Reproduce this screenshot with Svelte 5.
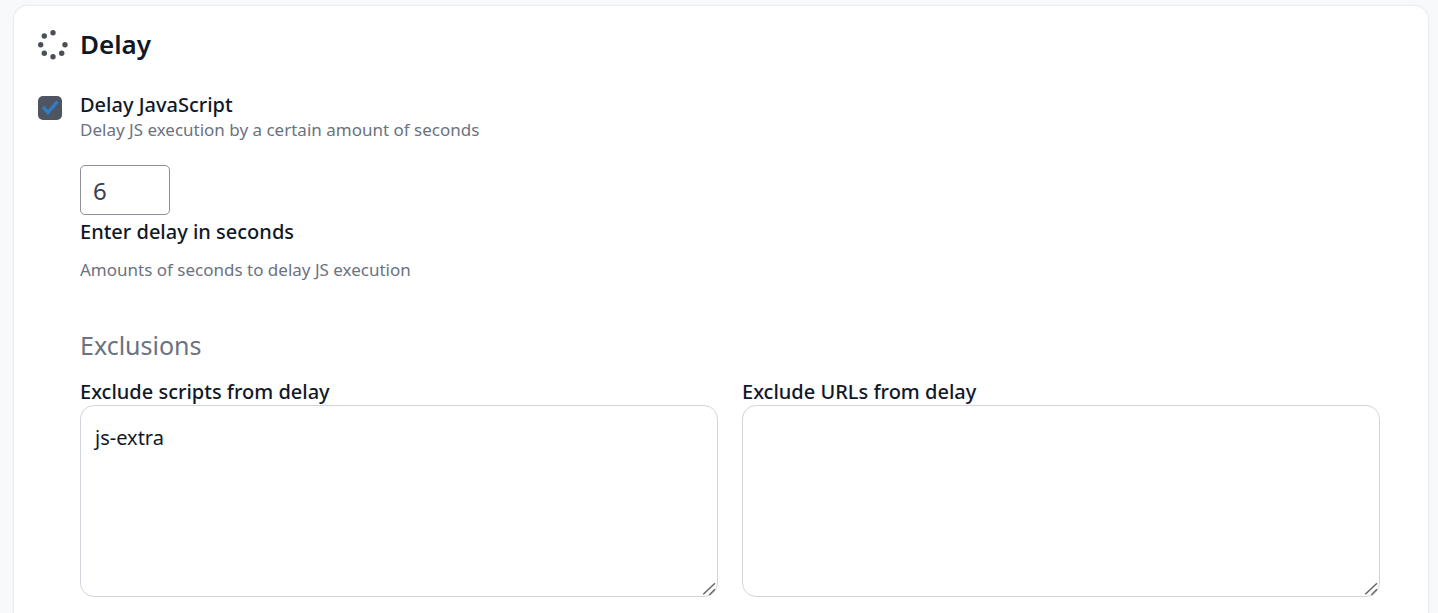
<script>
  let delayEnabled = true;
  let seconds = 6;
  let scripts = 'js-extra';
  let urls = '';

  const dots = [
    [15, 2.7], [6.3, 6], [2.7, 14.7], [6.3, 23.3],
    [15, 26.7], [23.7, 23.3], [27, 14.7]
  ];
</script>

<div class="page">
  <section class="card">
    <header class="title">
      <svg class="spinner" width="32" height="30" viewBox="0 0 32 30" aria-hidden="true">
        {#each dots as [cx, cy]}
          <circle {cx} {cy} r="2.7" fill="#4b4f57" />
        {/each}
      </svg>
      <h2>Delay</h2>
    </header>

    <div class="option">
      <label class="check">
        <input type="checkbox" bind:checked={delayEnabled} />
        <svg width="24" height="24" viewBox="0 0 24 24" aria-hidden="true">
          <rect width="24" height="24" rx="5" fill="#4f5560" />
          <path d="M5 11l5 5.5 9.5-11" fill="none" stroke="#2f7cc8" stroke-width="3.4" />
        </svg>
      </label>
      <div class="body">
        <div class="name">Delay JavaScript</div>
        <div class="hint">Delay JS execution by a certain amount of seconds</div>

        <input class="number" type="text" bind:value={seconds} />
        <div class="name field-label">Enter delay in seconds</div>
        <div class="hint field-hint">Amounts of seconds to delay JS execution</div>

        <h3>Exclusions</h3>
        <div class="columns">
          <div>
            <div class="name area-label">Exclude scripts from delay</div>
            <div class="area">
              <textarea bind:value={scripts}></textarea>
              <svg class="grip" width="16" height="16" viewBox="0 0 16 16" aria-hidden="true">
                <path d="M1.3 12.3L13 1.3M7.3 13L13 7.3" fill="none" stroke="#666" stroke-width="1.5" />
              </svg>
            </div>
          </div>
          <div>
            <div class="name area-label">Exclude URLs from delay</div>
            <div class="area">
              <textarea bind:value={urls}></textarea>
              <svg class="grip" width="16" height="16" viewBox="0 0 16 16" aria-hidden="true">
                <path d="M1.3 12.3L13 1.3M7.3 13L13 7.3" fill="none" stroke="#666" stroke-width="1.5" />
              </svg>
            </div>
          </div>
        </div>
      </div>
    </div>
  </section>
</div>

<style>
  :global(body) {
    background: #f8f9fb;
    font-family: "Noto Sans", "Open Sans", sans-serif;
    overflow: hidden;
  }

  .page {
    padding: 6px 10px 0 14px;
    height: 607px;
    overflow: hidden;
  }

  .card {
    background: #fff;
    border-radius: 14px;
    box-shadow: 0 0 2px 1px #e9eaee;
    padding: 22px 24px 40px 24px;
    height: 700px;
    box-sizing: border-box;
  }

  .title {
    display: flex;
    align-items: center;
    gap: 10px;
    height: 34px;
    margin-bottom: 30px;
  }

  .spinner {
    margin-top: -1px;
  }

  h2 {
    margin: -3px 0 0;
    font-size: 26px;
    font-weight: 600;
    color: #111827;
  }

  .option {
    display: flex;
    gap: 18px;
  }

  .check {
    display: block;
    width: 24px;
    height: 24px;
    margin-top: 4px;
    position: relative;
  }

  .check input {
    position: absolute;
    opacity: 0;
    margin: 0;
  }

  .body {
    flex: 1;
    padding-right: 24px;
  }

  .name {
    font-size: 20px;
    font-weight: 500;
    line-height: 26px;
    color: #111827;
  }

  .hint {
    font-size: 17px;
    line-height: 24px;
    color: #6b7280;
  }

  .number {
    display: block;
    box-sizing: border-box;
    width: 90px;
    height: 50px;
    margin-top: 23px;
    padding: 0 12px;
    border: 1px solid #8d9096;
    border-radius: 5px;
    font: inherit;
    font-size: 24px;
    color: #374151;
    outline: none;
  }

  .field-label {
    margin-top: 4px;
  }

  .field-hint {
    margin-top: 13px;
  }

  h3 {
    margin: 46px 0 0;
    font-size: 25px;
    font-weight: 400;
    line-height: 34px;
    color: #6b7280;
  }

  .columns {
    display: grid;
    grid-template-columns: 1fr 1fr;
    gap: 24px;
    margin-top: 17px;
  }

  .area-label {
    line-height: 26px;
  }

  .area {
    position: relative;
  }

  textarea {
    display: block;
    box-sizing: border-box;
    width: 100%;
    height: 192px;
    padding: 18px 14px;
    border: 1px solid #d1d5db;
    border-radius: 14px;
    font: inherit;
    font-size: 20px;
    line-height: 28px;
    color: #111827;
    outline: none;
    resize: none;
  }

  .grip {
    position: absolute;
    right: 0;
    bottom: -1px;
    pointer-events: none;
  }
</style>
